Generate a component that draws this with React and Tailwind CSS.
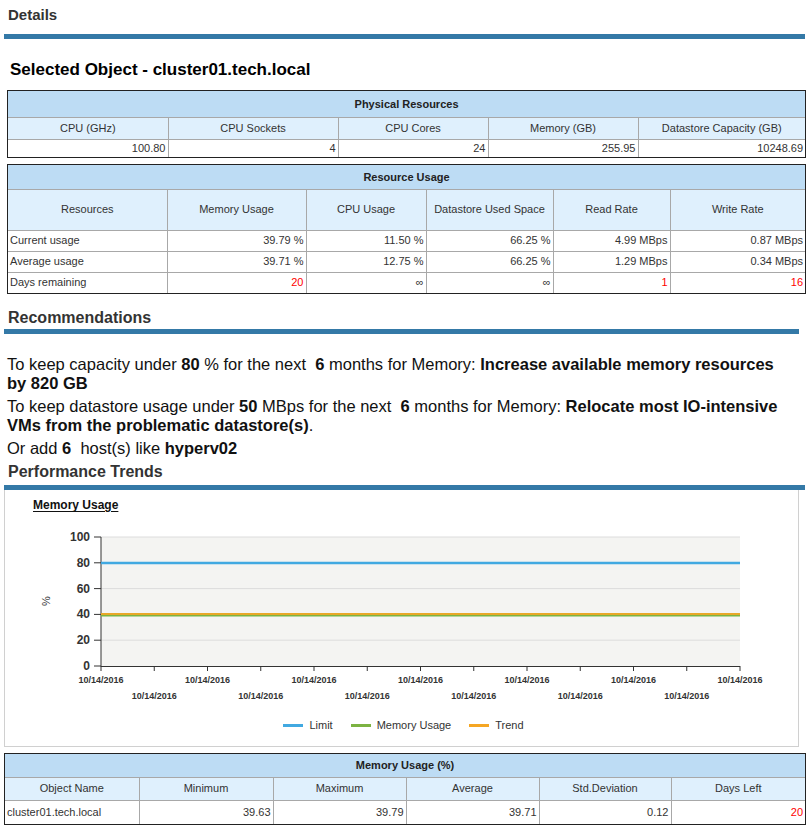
import React from 'react';

const FONT = { fontFamily: '"Liberation Sans", Arial, sans-serif' };

const physical = {
  cols: [160, 170, 150, 150, 167],
  head: ['CPU (GHz)', 'CPU Sockets', 'CPU Cores', 'Memory (GB)', 'Datastore Capacity (GB)'],
  rows: [[['100.80'], ['4'], ['24'], ['255.95'], ['10248.69']]],
};

const usage = {
  cols: [159, 139, 120, 127, 117, 135],
  head: ['Resources', 'Memory Usage', 'CPU Usage', 'Datastore Used Space', 'Read Rate', 'Write Rate'],
  rows: [
    [['Current usage', 'l'], ['39.79 %'], ['11.50 %'], ['66.25 %'], ['4.99 MBps'], ['0.87 MBps']],
    [['Average usage', 'l'], ['39.71 %'], ['12.75 %'], ['66.25 %'], ['1.29 MBps'], ['0.34 MBps']],
    [['Days remaining', 'l'], ['20', 'r'], ['∞'], ['∞'], ['1', 'r'], ['16', 'r']],
  ],
};

const memTable = {
  cols: [134, 134, 133, 133, 132, 134],
  head: ['Object Name', 'Minimum', 'Maximum', 'Average', 'Std.Deviation', 'Days Left'],
  rows: [[['cluster01.tech.local', 'l'], ['39.63'], ['39.79'], ['39.71'], ['0.12'], ['20', 'r']]],
};

const DataTable = ({ title, data, className, titleH, headH, rowH }) => (
  <div className={`border border-[#222] ${className}`}>
    <table className="w-full table-fixed border-collapse border-hidden text-[11px] text-[#333]">
      <colgroup>
        {data.cols.map((w, i) => (
          <col key={i} style={{ width: w }} />
        ))}
      </colgroup>
      <tbody>
        <tr className={titleH}>
          <td colSpan={data.cols.length} className="border border-[#a8a8a8] bg-[#bddcf4] text-center font-bold text-[#222]">
            {title}
          </td>
        </tr>
        <tr className={headH}>
          {data.head.map((h) => (
            <td key={h} className="border border-[#a8a8a8] bg-[#dff0fd] text-center">
              {h}
            </td>
          ))}
        </tr>
        {data.rows.map((row, ri) => (
          <tr key={ri} className={rowH}>
            {row.map(([v, f], ci) => (
              <td
                key={ci}
                className={`border border-[#a8a8a8] px-[2px] leading-none ${f === 'l' ? 'text-left' : 'text-right'} ${f === 'r' ? 'text-[#ff0000]' : ''}`}
              >
                {v}
              </td>
            ))}
          </tr>
        ))}
      </tbody>
    </table>
  </div>
);

const SectionHead = ({ children, h, barW = 'w-[801px]' }) => (
  <div>
    <div className={`flex items-center pl-[8px] text-[16px] font-bold text-[#333] ${h}`}>{children}</div>
    <div className={`ml-[4px] h-[5px] bg-[#3479a7] ${barW}`} />
  </div>
);

const ChartSvg = () => {
  const left = 101;
  const right = 740;
  const yOf = (v) => 665 - v * 1.29;
  const grid = [0, 20, 40, 60, 80, 100];
  const xt = Array.from({ length: 13 }, (_, i) => left + i * ((right - left) / 12));
  return (
    <svg width="793" height="190" className="block">
      <g transform="translate(-5,-520)" fontFamily='"Liberation Sans", Arial, sans-serif'>
        <rect x={left} y={536} width={right - left} height={129} fill="#f4f4f2" />
        {grid.slice(1).map((g) => (
          <line key={g} x1={left} x2={right} y1={yOf(g)} y2={yOf(g)} stroke="#dcdcdc" />
        ))}
        {grid.map((g) => (
          <g key={'t' + g}>
            <line x1={94} x2={left} y1={yOf(g)} y2={yOf(g)} stroke="#333" />
            <text x={90} y={yOf(g) + 4} textAnchor="end" fontSize="12" fontWeight="bold" fill="#333">
              {g}
            </text>
          </g>
        ))}
        <line x1={left} x2={left} y1={536} y2={665.5} stroke="#333" />
        <line x1={left} x2={right} y1={665.5} y2={665.5} stroke="#333" />
        {xt.map((x, i) => (
          <g key={'x' + i}>
            <line x1={x} x2={x} y1={665} y2={670} stroke="#333" />
            <text x={x} y={i % 2 === 0 ? 682 : 698} textAnchor="middle" fontSize="9" fontWeight="bold" fill="#333">
              10/14/2016
            </text>
          </g>
        ))}
        <line x1={left} x2={right} y1={562} y2={562} stroke="#41a9e1" strokeWidth="2.5" />
        <line x1={left} x2={right} y1={614} y2={614} stroke="#7cb342" strokeWidth="3" />
        <line x1={left} x2={right} y1={613} y2={613} stroke="#e8a828" strokeWidth="2" />
        <text x={50} y={600} transform="rotate(-90 50 600)" textAnchor="middle" fontSize="11" fill="#333">
          %
        </text>
      </g>
    </svg>
  );
};

const LegendItem = ({ color, label }) => (
  <div className="flex items-center gap-[6px]">
    <span className={`h-[3px] w-[20px] ${color}`} />
    <span>{label}</span>
  </div>
);

export default function App() {
  return (
    <div className="w-[809px] bg-white pb-[4px] text-[#222]" style={FONT}>
      <div className="flex h-[34px] items-center pb-[4px] pl-[8px] text-[15px] font-bold text-[#333]">Details</div>
      <div className="ml-[4px] h-[5px] w-[801px] bg-[#3479a7]" />

      <div className="flex h-[51px] items-center pl-[10px] pt-[10px] text-[17px] font-bold text-black">
        Selected Object - cluster01.tech.local
      </div>

      <DataTable
        title="Physical Resources"
        data={physical}
        className="ml-[7px] w-[799px]"
        titleH="h-[26px]"
        headH="h-[22px]"
        rowH="h-[18px]"
      />

      <DataTable
        title="Resource Usage"
        data={usage}
        className="ml-[7px] mt-[6px] w-[799px]"
        titleH="h-[24px]"
        headH="h-[41px]"
        rowH="h-[21px]"
      />

      <SectionHead h="h-[35px] pt-[12px]" barW="w-[795px]">
        Recommendations
      </SectionHead>

      <div className="flex flex-col gap-[4px] pl-[7px] pt-[21px] text-[16.5px] leading-[19px] text-[#111]">
        <p className="w-[780px]">
          To keep capacity under <b>80</b> % for the next&nbsp; <b>6</b> months for Memory:{' '}
          <b>Increase available memory resources by 820 GB</b>
        </p>
        <p className="w-[780px]">
          To keep datastore usage under <b>50</b> MBps for the next&nbsp; <b>6</b> months for Memory:{' '}
          <b>Relocate most IO-intensive VMs from the problematic datastore(s)</b>.
        </p>
        <p>
          Or add <b>6</b>&nbsp; host(s) like <b>hyperv02</b>
        </p>
      </div>

      <SectionHead h="h-[27px]">Performance Trends</SectionHead>

      <div className="ml-[4px] h-[257px] w-[795px] border-x border-b border-[#d0d0d0]">
        <div className="mb-[7px] flex h-[24px] items-end pl-[28px]">
          <span className="text-[12px] font-bold text-[#111] underline underline-offset-2">Memory Usage</span>
        </div>
        <ChartSvg />
        <div className="flex h-[28px] items-center justify-center gap-[18px] pl-[4px] text-[11px] text-[#333]">
          <LegendItem color="bg-[#41a9e1]" label="Limit" />
          <LegendItem color="bg-[#7cb342]" label="Memory Usage" />
          <LegendItem color="bg-[#f5a623]" label="Trend" />
        </div>
      </div>

      <DataTable
        title="Memory Usage (%)"
        data={memTable}
        className="ml-[4px] mt-[6px] w-[802px]"
        titleH="h-[23px]"
        headH="h-[23px]"
        rowH="h-[24px]"
      />
    </div>
  );
}
